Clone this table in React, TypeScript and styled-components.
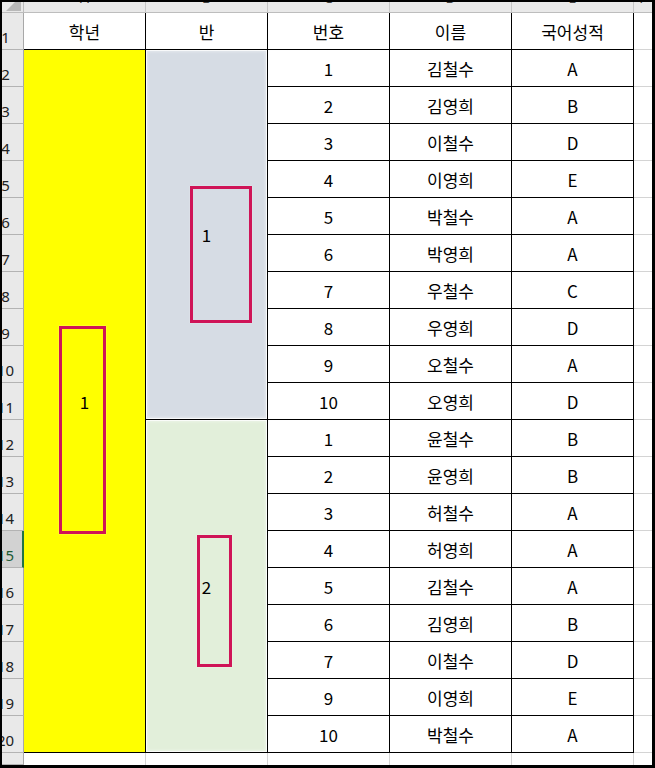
import React from "react";
import styled, { createGlobalStyle, css } from "styled-components";

const Global = createGlobalStyle`
  html, body { margin: 0; padding: 0; background: #ffffff; }
  body { font-family: "Noto Sans CJK KR", "Noto Sans", sans-serif; }
`;

const Frame = styled.div`
  box-sizing: border-box;
  width: 655px;
  height: 768px;
  border-style: solid;
  border-color: #000;
  border-width: 2px 3px 3px 2px;
  overflow: hidden;
  background: #fff;
`;

const Sheet = styled.div`
  display: grid;
  grid-template-columns: 22px repeat(5, 122px) 18px;
  grid-template-rows: 11px repeat(20, 37px) 12px;
  width: 650px;
  height: 763px;
`;

const Corner = styled.div`
  position: relative;
  box-sizing: border-box;
  background: #e9e9e9;
  border-right: 1px solid #bdbdbd;
  border-bottom: 1px solid #bdbdbd;
  &::after {
    content: "";
    position: absolute;
    right: 2px;
    bottom: 1px;
    width: 15px;
    height: 15px;
    background: #b9b9b9;
    clip-path: polygon(100% 0, 100% 100%, 0 100%);
  }
`;

const ColHead = styled.div<{ $last?: boolean }>`
  box-sizing: border-box;
  background: #e9e9e9;
  border-bottom: 1px solid #bdbdbd;
  border-right: ${(p) => (p.$last ? "none" : "1px solid #c6c6c6")};
  overflow: hidden;
  display: flex;
  justify-content: center;
  align-items: flex-start;
  font-family: "Noto Sans", sans-serif;
  font-size: 14px;
  line-height: 14px;
  color: #444;
  span {
    margin-top: -11px;
  }
`;

const RowHead = styled.div<{ $active?: boolean }>`
  box-sizing: border-box;
  background: ${(p) => (p.$active ? "#d2d2d2" : "#e9e9e9")};
  border-bottom: 1px solid #b3b3b3;
  border-right: ${(p) => (p.$active ? "2px solid #217346" : "1px solid #a8a8a8")};
  overflow: hidden;
  display: flex;
  justify-content: center;
  align-items: flex-end;
  padding: 0 ${(p) => (p.$active ? 13 : 14)}px 4px 0;
  font-family: "Noto Sans", sans-serif;
  font-size: 15px;
  line-height: 15px;
  color: ${(p) => (p.$active ? "#1d5a35" : "#222")};
  white-space: nowrap;
`;

const Cell = styled.div<{ $kind?: "data" | "side" | "foot" | "corner" }>`
  box-sizing: border-box;
  display: flex;
  align-items: center;
  justify-content: center;
  font-size: 17px;
  color: #000;
  background: #fff;
  white-space: nowrap;
  ${(p) =>
    p.$kind === "side"
      ? css`
          border-bottom: 1px solid #d4d4d4;
        `
      : p.$kind === "foot"
      ? css`
          border-right: 1px solid #d4d4d4;
        `
      : p.$kind === "corner"
      ? css``
      : css`
          border-right: 1px solid #000;
          border-bottom: 1px solid #000;
        `}
`;

const Merged = styled(Cell)<{ $span: number; $fill: string; $glow?: boolean }>`
  position: relative;
  grid-row: span ${(p) => p.$span};
  background: ${(p) => p.$fill};
  ${(p) =>
    p.$glow &&
    css`
      box-shadow: inset 0 0 0 1px rgba(255, 255, 255, 0.75),
        inset 0 0 3px 2px rgba(255, 255, 255, 0.35);
    `}
`;

const Mark = styled.div`
  position: absolute;
  box-sizing: border-box;
  border: 3px solid #cf1457;
  box-shadow: 0 0 1px rgba(255, 255, 255, 0.8);
  pointer-events: none;
`;

type Row = [number, string, string];

const rows: Row[] = [
  [1, "김철수", "A"],
  [2, "김영희", "B"],
  [3, "이철수", "D"],
  [4, "이영희", "E"],
  [5, "박철수", "A"],
  [6, "박영희", "A"],
  [7, "우철수", "C"],
  [8, "우영희", "D"],
  [9, "오철수", "A"],
  [10, "오영희", "D"],
  [1, "윤철수", "B"],
  [2, "윤영희", "B"],
  [3, "허철수", "A"],
  [4, "허영희", "A"],
  [5, "김철수", "A"],
  [6, "김영희", "B"],
  [7, "이철수", "D"],
  [9, "이영희", "E"],
  [10, "박철수", "A"],
];

const headers = ["학년", "반", "번호", "이름", "국어성적"];
const letters = ["A", "B", "C", "D", "E"];

export default function App() {
  return (
    <>
      <Global />
      <Frame>
        <Sheet>
          <Corner />
          {letters.map((l) => (
            <ColHead key={l}>
              <span>{l}</span>
            </ColHead>
          ))}
          <ColHead $last>
            <span>F</span>
          </ColHead>

          <RowHead>1</RowHead>
          {headers.map((h) => (
            <Cell key={h}>{h}</Cell>
          ))}
          <Cell $kind="side" />

          {rows.map((r, i) => {
            const n = i + 2;
            return (
              <React.Fragment key={n}>
                <RowHead $active={n === 15}>{n}</RowHead>
                {i === 0 && (
                  <Merged $span={19} $fill="#ffff00">
                    1
                    <Mark style={{ left: 35, top: 276, width: 47, height: 208 }} />
                  </Merged>
                )}
                {i === 0 && (
                  <Merged $span={10} $fill="#d6dce4" $glow>
                    1
                    <Mark style={{ left: 44, top: 136, width: 62, height: 137 }} />
                  </Merged>
                )}
                {i === 10 && (
                  <Merged $span={9} $fill="#e2efda" $glow>
                    2
                    <Mark style={{ left: 51, top: 115, width: 35, height: 132 }} />
                  </Merged>
                )}
                <Cell>{r[0]}</Cell>
                <Cell>{r[1]}</Cell>
                <Cell>{r[2]}</Cell>
                <Cell $kind="side" />
              </React.Fragment>
            );
          })}

          <RowHead />
          {letters.map((l) => (
            <Cell key={"f" + l} $kind="foot" />
          ))}
          <Cell $kind="corner" />
        </Sheet>
      </Frame>
    </>
  );
}
